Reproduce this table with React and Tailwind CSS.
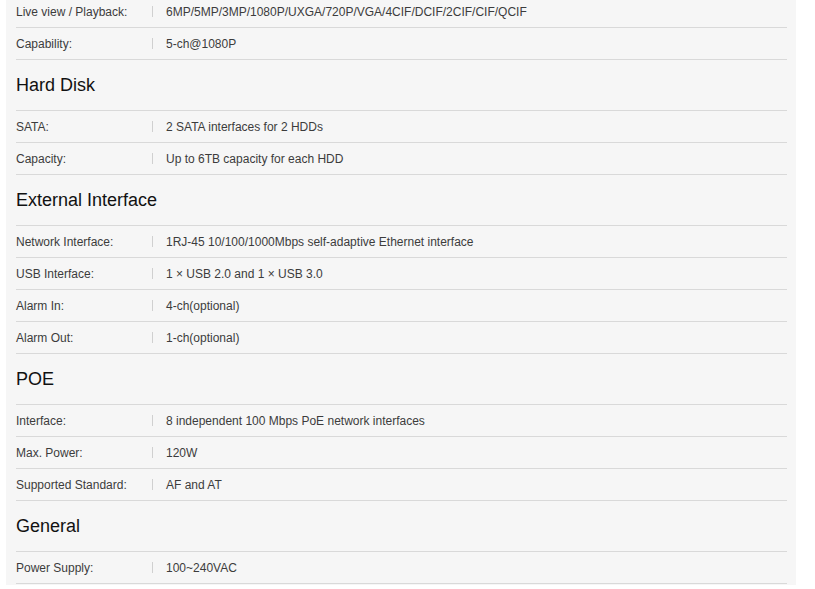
import React from "react";

const sections = [
  {
    title: null,
    rows: [
      ["Live view / Playback:", "6MP/5MP/3MP/1080P/UXGA/720P/VGA/4CIF/DCIF/2CIF/CIF/QCIF"],
      ["Capability:", "5-ch@1080P"],
    ],
  },
  {
    title: "Hard Disk",
    rows: [
      ["SATA:", "2 SATA interfaces for 2 HDDs"],
      ["Capacity:", "Up to 6TB capacity for each HDD"],
    ],
  },
  {
    title: "External Interface",
    rows: [
      ["Network Interface:", "1RJ-45 10/100/1000Mbps self-adaptive Ethernet interface"],
      ["USB Interface:", "1 \u00d7 USB 2.0 and 1 \u00d7 USB 3.0"],
      ["Alarm In:", "4-ch(optional)"],
      ["Alarm Out:", "1-ch(optional)"],
    ],
  },
  {
    title: "POE",
    rows: [
      ["Interface:", "8 independent 100 Mbps PoE network interfaces"],
      ["Max. Power:", "120W"],
      ["Supported Standard:", "AF and AT"],
    ],
  },
  {
    title: "General",
    rows: [["Power Supply:", "100~240VAC"]],
  },
];

function Row({ label, value }) {
  return (
    <div className="flex items-center h-[32px] border-b border-[#d9d9d9] text-[12px] text-[#3c3c3c]">
      <div className="w-[136px] shrink-0">{label}</div>
      <div className="w-px h-[11px] bg-[#d0d0d0] shrink-0" />
      <div className="pl-[13px]">{value}</div>
    </div>
  );
}

export default function App() {
  return (
    <div
      className="w-[815px] h-[589px] bg-white overflow-hidden"
      style={{ fontFamily: '"Liberation Sans", Arial, sans-serif' }}
    >
      <div className="ml-[6px] w-[790px] h-full bg-[#f6f6f6] pl-[10px] pr-[9px]">
        <div className="-mt-[4px]">
          {sections.map((s, i) => (
            <div key={i}>
              {s.title && (
                <div className="flex items-center h-[51px] border-b border-[#d9d9d9] text-[18px] text-[#111]">
                  {s.title}
                </div>
              )}
              {s.rows.map(([l, v], j) => (
                <Row key={j} label={l} value={v} />
              ))}
            </div>
          ))}
        </div>
      </div>
    </div>
  );
}
